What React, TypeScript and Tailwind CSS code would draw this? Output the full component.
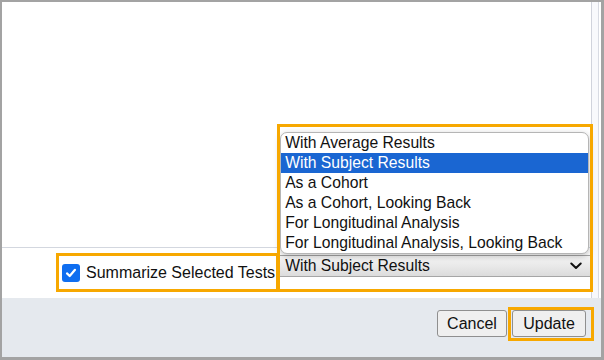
const OPTIONS = [
  'With Average Results',
  'With Subject Results',
  'As a Cohort',
  'As a Cohort, Looking Back',
  'For Longitudinal Analysis',
  'For Longitudinal Analysis, Looking Back',
];

const SELECTED = 'With Subject Results';

export default function App() {
  return (
    <div
      className="w-[604px] h-[360px] bg-white border-t-2 border-l-2 border-r-[3px] border-b-[3px] border-[#a3a3a3] flex flex-col text-[16px] leading-none text-[#111]"
      style={{ fontFamily: '"Liberation Sans", Arial, sans-serif' }}
    >
      {/* Main area with scroll strip */}
      <div className="flex h-[296px]">
        <div className="w-[589px] flex flex-col">
          {/* Empty content */}
          <div className="h-[246px] border-b border-[#d3d7df]" />

          {/* Options row */}
          <div className="h-[50px] flex items-start pt-[5px] pl-[54px]">
            <label className="h-[39px] border-[3px] border-[#f7a800] flex items-center pl-[3px] pr-[1px] gap-[6px]">
              <span className="w-[18px] h-[18px] rounded-[3px] bg-[#0f6ef0] flex items-center justify-center">
                <svg width="12" height="12" viewBox="0 0 12 12" aria-hidden="true">
                  <path d="M2 6.4 4.7 9 10 2.8" fill="none" stroke="white" strokeWidth="2.2" strokeLinecap="round" strokeLinejoin="round" />
                </svg>
              </span>
              <span className="whitespace-nowrap">Summarize Selected Tests</span>
            </label>

            <div className="relative ml-[1px] mt-[2px] w-[310px] text-[15.7px]">
              {/* Open list */}
              <ul className="absolute left-0 top-[-123px] w-[309px] bg-white border border-[#b5b5b5] rounded-[7px] overflow-hidden shadow-[0_2px_6px_rgba(0,0,0,0.25)] z-10">
                {OPTIONS.map((opt) => (
                  <li
                    key={opt}
                    className={`h-[20px] px-[4px] flex items-center whitespace-nowrap ${
                      opt === SELECTED ? 'bg-[#1a66d2] text-white' : ''
                    }`}
                  >
                    {opt}
                  </li>
                ))}
              </ul>

              {/* Closed select */}
              <div className="h-[22px] border-y border-[#a6a6a6] bg-gradient-to-b from-[#f6f6f6] to-[#dcdcdc] flex items-center justify-between pl-[5px] pr-[8px]">
                <span>{SELECTED}</span>
                <svg width="12" height="8" viewBox="0 0 12 8" aria-hidden="true">
                  <path d="M1.3 1.5 6 6 10.7 1.5" fill="none" stroke="#111" strokeWidth="2" strokeLinecap="round" strokeLinejoin="round" />
                </svg>
              </div>

              {/* Highlight box */}
              <div className="absolute left-[-3px] right-[-3px] top-[-131px] bottom-[-15px] border-[3px] border-[#f7a800] pointer-events-none z-20" />
            </div>
          </div>
        </div>

        {/* Scroll strip */}
        <div className="flex w-[10px]">
          <div className="w-[7px] border-l border-[#d0d3dc] bg-[#f8f9fc]" />
          <div className="w-[3px] border-l border-[#d8dbe3] bg-white" />
        </div>
      </div>

      {/* Footer */}
      <div className="flex-1 bg-[#e5e9ee] flex items-start justify-end pt-[12px] pr-[15px] gap-[5px]">
        <button className="h-[27px] w-[70px] border border-[#8f8f8f] rounded-[3px] bg-[#efefef] text-[16px]">
          Cancel
        </button>
        <div className="relative">
          <button className="h-[27px] w-[74px] border border-[#8f8f8f] rounded-[3px] bg-[#efefef] text-[16px]">
            Update
          </button>
          <div className="absolute left-[-4px] right-[-8px] top-[-3px] bottom-[-4px] border-[3px] border-[#f7a800] pointer-events-none" />
        </div>
      </div>
    </div>
  );
}
